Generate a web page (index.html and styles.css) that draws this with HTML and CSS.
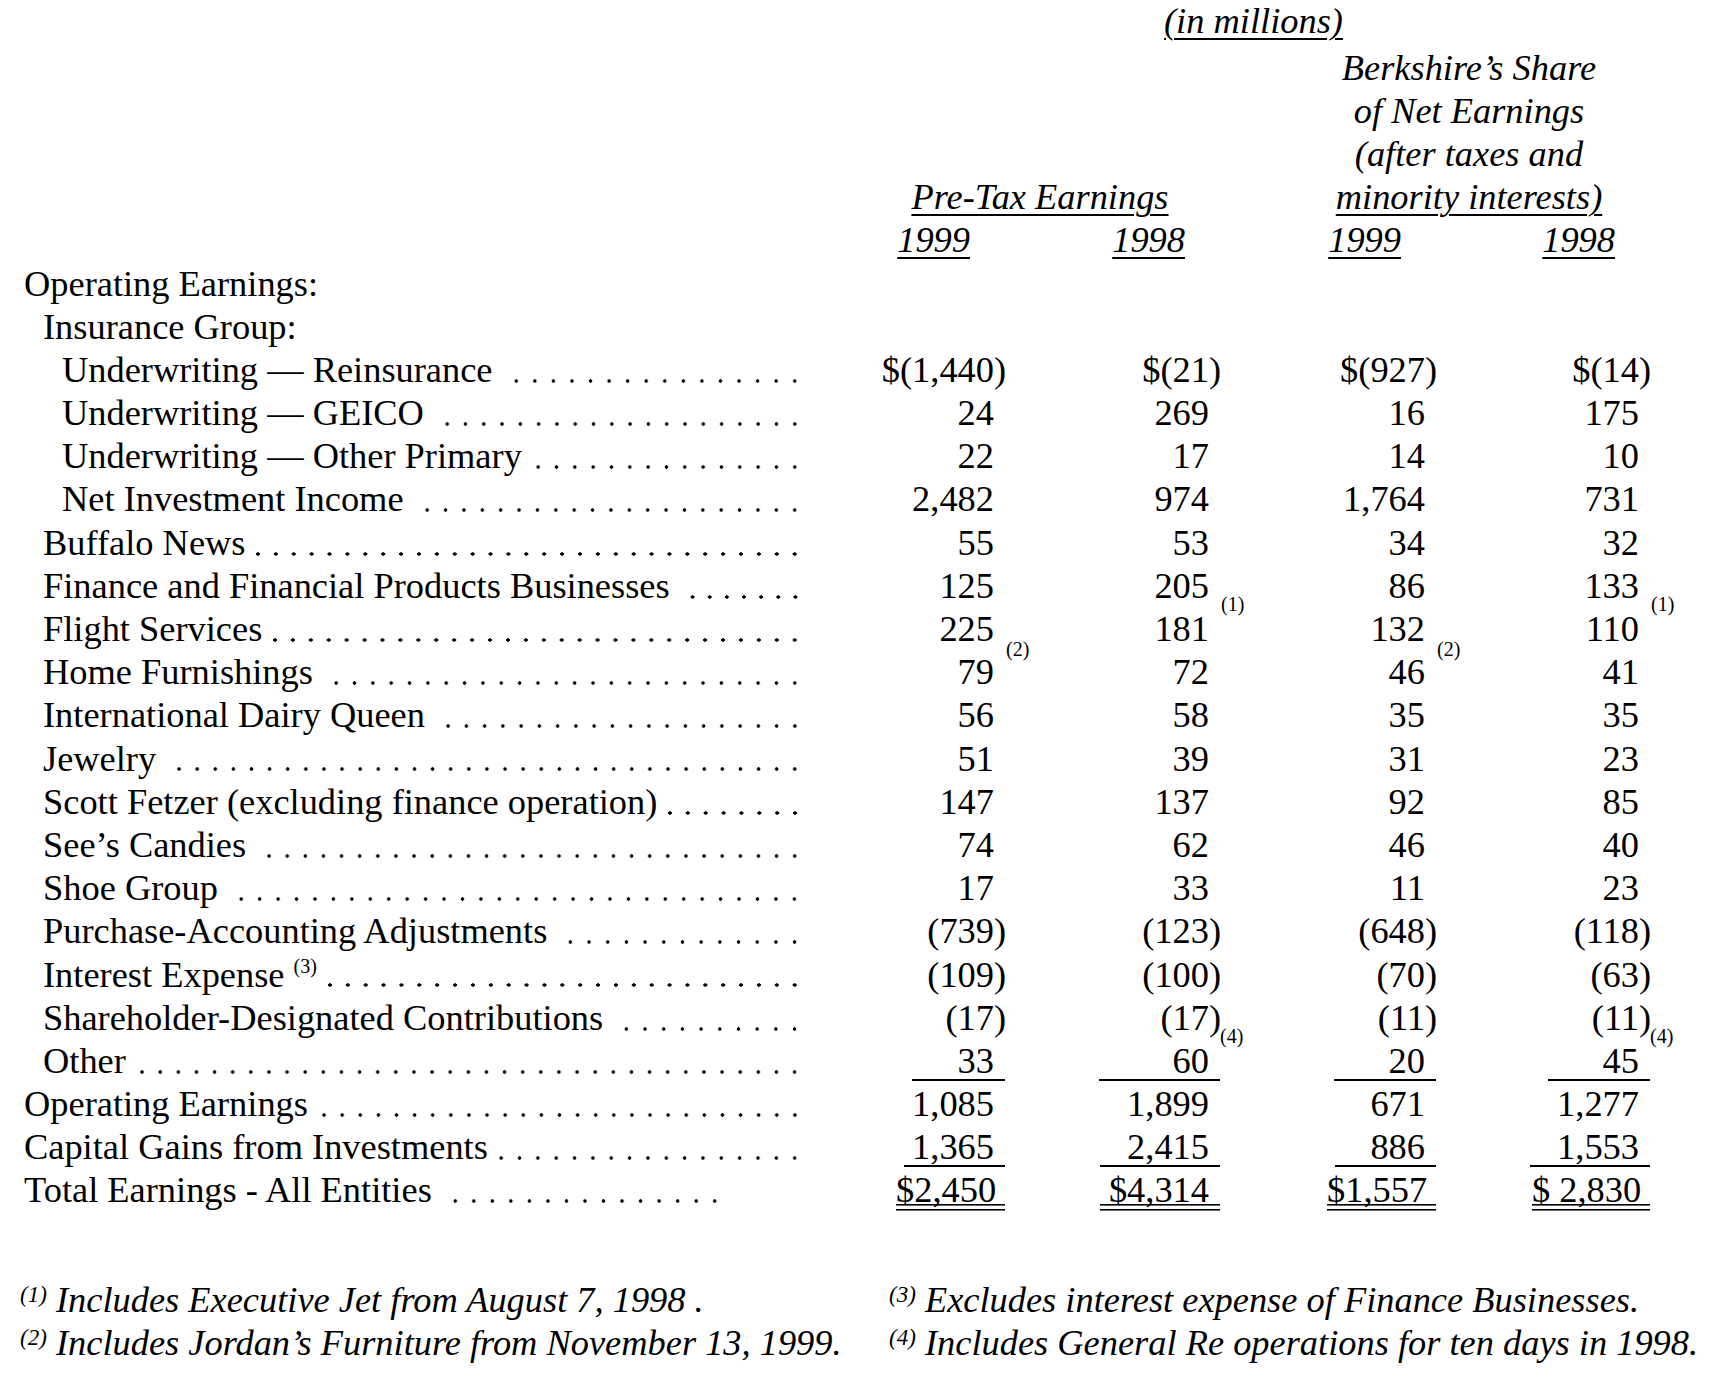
FILE: index.html
```html
<!DOCTYPE html>
<html lang="en">
<head>
<meta charset="utf-8">
<title>Berkshire Earnings</title>
<link rel="stylesheet" href="styles.css">
</head>
<body>
<div class="page">
  <div class="h-millions"><span class="u">(in millions)</span></div>
  <div class="h-groups">
    <div class="h-pretax"><span class="u">Pre-Tax Earnings</span></div>
    <div class="h-share">Berkshire’s Share<br>of Net Earnings<br>(after taxes and<br><span class="u">minority interests)</span></div>
  </div>
  <div class="row h-years">
    <div></div>
    <div class="yr"><span class="u">1999</span></div>
    <div class="yr"><span class="u">1998</span></div>
    <div class="yr"><span class="u">1999</span></div>
    <div class="yr"><span class="u">1998</span></div>
  </div>

  <div class="row">
    <div class="lab l0"><span class="txt">Operating Earnings:</span></div>
    <div class="num"></div><div class="num"></div><div class="num"></div><div class="num"></div>
  </div>
  <div class="row">
    <div class="lab l1"><span class="txt">Insurance Group:</span></div>
    <div class="num"></div><div class="num"></div><div class="num"></div><div class="num"></div>
  </div>
  <div class="row">
    <div class="lab l2"><span class="txt">Underwriting — Reinsurance</span><span class="lead lead-wide"></span></div>
    <div class="num">$(1,440<span class="hp">)</span></div>
    <div class="num">$(21<span class="hp">)</span></div>
    <div class="num">$(927<span class="hp">)</span></div>
    <div class="num">$(14<span class="hp">)</span></div>
  </div>
  <div class="row">
    <div class="lab l2"><span class="txt">Underwriting — GEICO</span><span class="lead lead-wide"></span></div>
    <div class="num">24</div><div class="num">269</div><div class="num">16</div><div class="num">175</div>
  </div>
  <div class="row">
    <div class="lab l2"><span class="txt">Underwriting — Other Primary</span><span class="lead"></span></div>
    <div class="num">22</div><div class="num">17</div><div class="num">14</div><div class="num">10</div>
  </div>
  <div class="row">
    <div class="lab l2"><span class="txt">Net Investment Income</span><span class="lead lead-wide"></span></div>
    <div class="num">2,482</div><div class="num">974</div><div class="num">1,764</div><div class="num">731</div>
  </div>
  <div class="row">
    <div class="lab l1"><span class="txt">Buffalo News</span><span class="lead lead-tight"></span></div>
    <div class="num">55</div><div class="num">53</div><div class="num">34</div><div class="num">32</div>
  </div>
  <div class="row">
    <div class="lab l1"><span class="txt">Finance and Financial Products Businesses</span><span class="lead lead-wide"></span></div>
    <div class="num">125</div>
    <div class="num">205<span class="fn fn1">(1)</span></div>
    <div class="num">86</div>
    <div class="num">133<span class="fn fn1">(1)</span></div>
  </div>
  <div class="row">
    <div class="lab l1"><span class="txt">Flight Services</span><span class="lead lead-tight"></span></div>
    <div class="num">225<span class="fn fn2">(2)</span></div>
    <div class="num">181</div>
    <div class="num">132<span class="fn fn2">(2)</span></div>
    <div class="num">110</div>
  </div>
  <div class="row">
    <div class="lab l1"><span class="txt">Home Furnishings</span><span class="lead lead-wide"></span></div>
    <div class="num">79</div><div class="num">72</div><div class="num">46</div><div class="num">41</div>
  </div>
  <div class="row">
    <div class="lab l1"><span class="txt">International Dairy Queen</span><span class="lead lead-wide"></span></div>
    <div class="num">56</div><div class="num">58</div><div class="num">35</div><div class="num">35</div>
  </div>
  <div class="row">
    <div class="lab l1"><span class="txt">Jewelry</span><span class="lead lead-wide"></span></div>
    <div class="num">51</div><div class="num">39</div><div class="num">31</div><div class="num">23</div>
  </div>
  <div class="row">
    <div class="lab l1"><span class="txt">Scott Fetzer (excluding finance operation)</span><span class="lead lead-tight"></span></div>
    <div class="num">147</div><div class="num">137</div><div class="num">92</div><div class="num">85</div>
  </div>
  <div class="row">
    <div class="lab l1"><span class="txt">See’s Candies</span><span class="lead lead-wide"></span></div>
    <div class="num">74</div><div class="num">62</div><div class="num">46</div><div class="num">40</div>
  </div>
  <div class="row">
    <div class="lab l1"><span class="txt">Shoe Group</span><span class="lead lead-wide"></span></div>
    <div class="num">17</div><div class="num">33</div><div class="num">11</div><div class="num">23</div>
  </div>
  <div class="row">
    <div class="lab l1"><span class="txt">Purchase-Accounting Adjustments</span><span class="lead lead-wide"></span></div>
    <div class="num">(739<span class="hp">)</span></div>
    <div class="num">(123<span class="hp">)</span></div>
    <div class="num">(648<span class="hp">)</span></div>
    <div class="num">(118<span class="hp">)</span></div>
  </div>
  <div class="row">
    <div class="lab l1"><span class="txt">Interest Expense <span class="sup">(3)</span></span><span class="lead lead-tight"></span></div>
    <div class="num">(109<span class="hp">)</span></div>
    <div class="num">(100<span class="hp">)</span></div>
    <div class="num">(70<span class="hp">)</span></div>
    <div class="num">(63<span class="hp">)</span></div>
  </div>
  <div class="row">
    <div class="lab l1"><span class="txt">Shareholder-Designated Contributions</span><span class="lead lead-wide"></span></div>
    <div class="num">(17<span class="hp">)</span></div>
    <div class="num">(17<span class="hp">)</span><span class="fn fn4">(4)</span></div>
    <div class="num">(11<span class="hp">)</span></div>
    <div class="num">(11<span class="hp">)</span><span class="fn fn4">(4)</span></div>
  </div>
  <div class="row">
    <div class="lab l1"><span class="txt">Other</span><span class="lead"></span></div>
    <div class="num"><span class="ul w93">33</span></div>
    <div class="num"><span class="ul w121">60</span></div>
    <div class="num"><span class="ul w102">20</span></div>
    <div class="num"><span class="ul w102">45</span></div>
  </div>
  <div class="row">
    <div class="lab l0"><span class="txt">Operating Earnings</span><span class="lead"></span></div>
    <div class="num">1,085</div><div class="num">1,899</div><div class="num">671</div><div class="num">1,277</div>
  </div>
  <div class="row">
    <div class="lab l0"><span class="txt">Capital Gains from Investments</span><span class="lead lead-tight"></span></div>
    <div class="num"><span class="ul w101">1,365</span></div>
    <div class="num"><span class="ul w120">2,415</span></div>
    <div class="num"><span class="ul w101">886</span></div>
    <div class="num"><span class="ul w120">1,553</span></div>
  </div>
  <div class="row">
    <div class="lab l0"><span class="txt">Total Earnings - All Entities</span><span class="lead lead-wide short"></span></div>
    <div class="num"><span class="dul w109">$2,450</span></div>
    <div class="num"><span class="dul w120">$4,314</span></div>
    <div class="num"><span class="dul w109">$1,557</span></div>
    <div class="num"><span class="dul w118">$ 2,830</span></div>
  </div>

  <div class="notes">
    <div class="note"><span class="nm">(1)</span> Includes Executive Jet from August 7, 1998 .</div>
    <div class="note"><span class="nm">(3)</span> Excludes interest expense of Finance Businesses.</div>
    <div class="note"><span class="nm">(2)</span> Includes Jordan’s Furniture from November 13, 1999.</div>
    <div class="note"><span class="nm">(4)</span> Includes General Re operations for ten days in 1998.</div>
  </div>
</div>
</body>
</html>
```

FILE: styles.css
```css
* { box-sizing: border-box; }

html, body {
  margin: 0;
  padding: 0;
  background: #ffffff;
}

body {
  font-family: "Liberation Serif", "Times New Roman", serif;
  font-size: 36.4px;
  line-height: 43.2px;
  color: #000000;
}

.page {
  width: 1722px;
}

.u {
  text-decoration: underline;
  text-decoration-thickness: 2px;
  text-underline-offset: 5px;
}

.h-millions {
  height: 46.5px;
  line-height: 43.2px;
  padding-left: 1164px;
  font-style: italic;
  white-space: nowrap;
}

.h-groups {
  display: flex;
  align-items: flex-end;
  font-style: italic;
  white-space: nowrap;
}

.h-pretax {
  margin-left: 840px;
  width: 400px;
  text-align: center;
}

.h-share {
  margin-left: 29px;
  width: 400px;
  text-align: center;
}

.row {
  display: grid;
  grid-template-columns: 800px 194px 215px 216px 214px;
  height: 43.2px;
}

.yr {
  text-align: right;
  padding-right: 24px;
  font-style: italic;
}

.lab {
  display: flex;
  white-space: nowrap;
}

.l0 { padding-left: 24px; }
.l1 { padding-left: 43px; }
.l2 { padding-left: 62px; }

.lead {
  flex: 1;
  margin-left: 7px;
  margin-right: -4px;
  background-image: radial-gradient(circle, #000000 0, #000000 1.6px, rgba(0, 0, 0, 0) 2.1px);
  background-size: 18.2px 4.4px;
  background-repeat: round no-repeat;
  background-position: left 0 bottom 8.9px;
}

.lead.lead-tight {
  margin-left: 4px;
}

.lead.lead-wide {
  margin-left: 14px;
}

.lead.short {
  margin-right: 76px;
}

.num {
  position: relative;
  text-align: right;
  white-space: nowrap;
}

.hp {
  margin-right: -0.333em;
}

.ul,
.dul {
  display: inline-block;
  padding-right: 11px;
  margin-right: -11px;
  text-align: right;
}

.ul {
  background: linear-gradient(#000000, #000000) no-repeat left 0 top 39px / 100% 2px;
}

.dul {
  background:
    linear-gradient(#000000, #000000) no-repeat left 0 top 34.4px / 100% 1.6px,
    linear-gradient(#000000, #000000) no-repeat left 0 top 40px / 100% 1.6px;
}

.w93 { width: 93px; }
.w101 { width: 101px; }
.w102 { width: 102px; }
.w109 { width: 109px; }
.w118 { width: 118px; }
.w120 { width: 120px; }
.w121 { width: 121px; }

.fn {
  position: absolute;
  left: calc(100% + 12px);
  font-size: 20px;
  line-height: 20px;
}

.fn1 { top: 29px; }
.fn2 { top: 30.5px; }
.fn4 { top: 29px; left: calc(100% + 11px); }

.sup {
  font-size: 20px;
  line-height: 20px;
  vertical-align: 14px;
}

.notes {
  display: grid;
  grid-template-columns: 869px 1fr;
  padding-left: 20px;
  margin-top: 66px;
  font-style: italic;
  white-space: nowrap;
}

.nm {
  font-size: 23px;
  line-height: 20px;
  vertical-align: 10px;
}
```
